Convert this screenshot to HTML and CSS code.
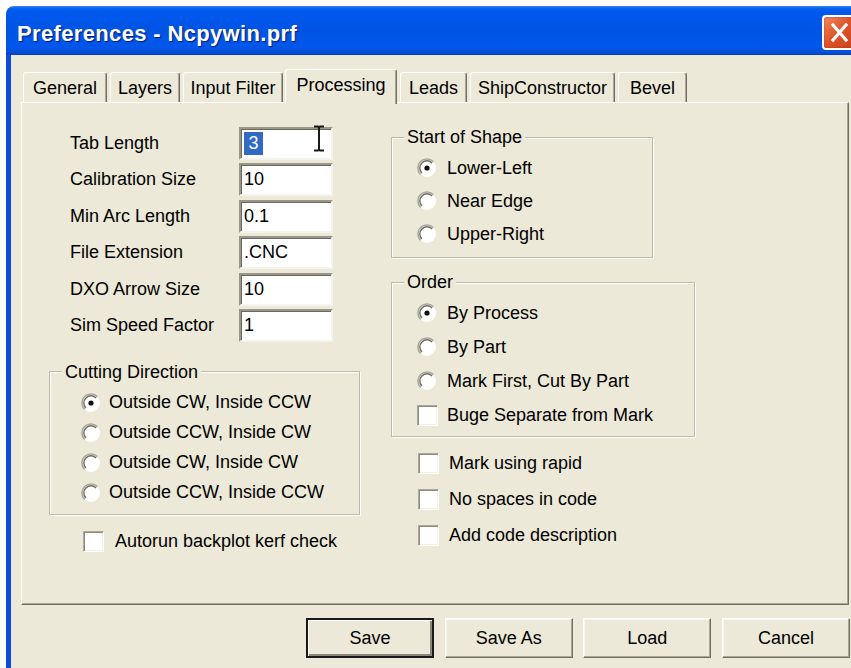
FILE: index.html
```html
<!DOCTYPE html>
<html lang="en">
<head>
<meta charset="utf-8">
<title>Preferences - Ncpywin.prf</title>
<link rel="stylesheet" href="styles.css">
</head>
<body>
<div class="window">
  <div class="titlebar">
    <span class="title">Preferences - Ncpywin.prf</span>
    <span class="close">
      <svg viewBox="0 0 31 31" width="31" height="31"><path d="M9 8 L22 23 M22 8 L9 23" stroke="#fff" stroke-width="3.2" stroke-linecap="square" fill="none"/></svg>
    </span>
  </div>
  <div class="frame">
    <div class="content">
      <div class="tabs">
        <div class="tab t-general">General</div>
        <div class="tab t-layers">Layers</div>
        <div class="tab t-input">Input Filter</div>
        <div class="tab t-processing active">Processing</div>
        <div class="tab t-leads">Leads</div>
        <div class="tab t-ship">ShipConstructor</div>
        <div class="tab t-bevel">Bevel</div>
      </div>

      <div class="panel">
        <div class="col-left">
          <div class="fields">
            <div class="field">
              <span class="label">Tab Length</span>
              <div class="input"><span class="sel">3</span>
                <svg class="ibeam" viewBox="0 0 14 27" width="14" height="27"><path d="M2 1.5 H6 L7 2.5 L8 1.5 H12 M7 2.5 V24.5 M2 25.5 H6 L7 24.5 L8 25.5 H12" stroke="#1a1a1a" stroke-width="2" fill="none"/></svg>
              </div>
            </div>
            <div class="field"><span class="label">Calibration Size</span><div class="input">10</div></div>
            <div class="field"><span class="label">Min Arc Length</span><div class="input">0.1</div></div>
            <div class="field"><span class="label">File Extension</span><div class="input">.CNC</div></div>
            <div class="field"><span class="label">DXO Arrow Size</span><div class="input">10</div></div>
            <div class="field"><span class="label">Sim Speed Factor</span><div class="input">1</div></div>
          </div>

          <fieldset class="group g-cut">
            <legend>Cutting Direction</legend>
            <div class="opts">
              <div class="opt">
                <svg class="radio" viewBox="0 0 20 20" width="20" height="20"><circle cx="10" cy="10" r="9" fill="#fff"/><path d="M3.6 16.4 A9 9 0 0 1 16.4 3.6" stroke="#aca899" stroke-width="1.6" fill="none"/><path d="M4.9 15.1 A7.2 7.2 0 0 1 15.1 4.9" stroke="#716f64" stroke-width="1.4" fill="none"/><circle cx="10" cy="10" r="2.6" fill="#111"/></svg>
                <span>Outside CW, Inside CCW</span>
              </div>
              <div class="opt">
                <svg class="radio" viewBox="0 0 20 20" width="20" height="20"><circle cx="10" cy="10" r="9" fill="#fff"/><path d="M3.6 16.4 A9 9 0 0 1 16.4 3.6" stroke="#aca899" stroke-width="1.6" fill="none"/><path d="M4.9 15.1 A7.2 7.2 0 0 1 15.1 4.9" stroke="#716f64" stroke-width="1.4" fill="none"/></svg>
                <span>Outside CCW, Inside CW</span>
              </div>
              <div class="opt">
                <svg class="radio" viewBox="0 0 20 20" width="20" height="20"><circle cx="10" cy="10" r="9" fill="#fff"/><path d="M3.6 16.4 A9 9 0 0 1 16.4 3.6" stroke="#aca899" stroke-width="1.6" fill="none"/><path d="M4.9 15.1 A7.2 7.2 0 0 1 15.1 4.9" stroke="#716f64" stroke-width="1.4" fill="none"/></svg>
                <span>Outside CW, Inside CW</span>
              </div>
              <div class="opt">
                <svg class="radio" viewBox="0 0 20 20" width="20" height="20"><circle cx="10" cy="10" r="9" fill="#fff"/><path d="M3.6 16.4 A9 9 0 0 1 16.4 3.6" stroke="#aca899" stroke-width="1.6" fill="none"/><path d="M4.9 15.1 A7.2 7.2 0 0 1 15.1 4.9" stroke="#716f64" stroke-width="1.4" fill="none"/></svg>
                <span>Outside CCW, Inside CCW</span>
              </div>
            </div>
          </fieldset>

          <div class="opt autorun"><span class="box"></span><span>Autorun backplot kerf check</span></div>
        </div>

        <div class="col-right">
          <fieldset class="group g-start">
            <legend>Start of Shape</legend>
            <div class="opts">
              <div class="opt">
                <svg class="radio" viewBox="0 0 20 20" width="20" height="20"><circle cx="10" cy="10" r="9" fill="#fff"/><path d="M3.6 16.4 A9 9 0 0 1 16.4 3.6" stroke="#aca899" stroke-width="1.6" fill="none"/><path d="M4.9 15.1 A7.2 7.2 0 0 1 15.1 4.9" stroke="#716f64" stroke-width="1.4" fill="none"/><circle cx="10" cy="10" r="2.6" fill="#111"/></svg>
                <span>Lower-Left</span>
              </div>
              <div class="opt">
                <svg class="radio" viewBox="0 0 20 20" width="20" height="20"><circle cx="10" cy="10" r="9" fill="#fff"/><path d="M3.6 16.4 A9 9 0 0 1 16.4 3.6" stroke="#aca899" stroke-width="1.6" fill="none"/><path d="M4.9 15.1 A7.2 7.2 0 0 1 15.1 4.9" stroke="#716f64" stroke-width="1.4" fill="none"/></svg>
                <span>Near Edge</span>
              </div>
              <div class="opt">
                <svg class="radio" viewBox="0 0 20 20" width="20" height="20"><circle cx="10" cy="10" r="9" fill="#fff"/><path d="M3.6 16.4 A9 9 0 0 1 16.4 3.6" stroke="#aca899" stroke-width="1.6" fill="none"/><path d="M4.9 15.1 A7.2 7.2 0 0 1 15.1 4.9" stroke="#716f64" stroke-width="1.4" fill="none"/></svg>
                <span>Upper-Right</span>
              </div>
            </div>
          </fieldset>

          <fieldset class="group g-order">
            <legend>Order</legend>
            <div class="opts">
              <div class="opt">
                <svg class="radio" viewBox="0 0 20 20" width="20" height="20"><circle cx="10" cy="10" r="9" fill="#fff"/><path d="M3.6 16.4 A9 9 0 0 1 16.4 3.6" stroke="#aca899" stroke-width="1.6" fill="none"/><path d="M4.9 15.1 A7.2 7.2 0 0 1 15.1 4.9" stroke="#716f64" stroke-width="1.4" fill="none"/><circle cx="10" cy="10" r="2.6" fill="#111"/></svg>
                <span>By Process</span>
              </div>
              <div class="opt">
                <svg class="radio" viewBox="0 0 20 20" width="20" height="20"><circle cx="10" cy="10" r="9" fill="#fff"/><path d="M3.6 16.4 A9 9 0 0 1 16.4 3.6" stroke="#aca899" stroke-width="1.6" fill="none"/><path d="M4.9 15.1 A7.2 7.2 0 0 1 15.1 4.9" stroke="#716f64" stroke-width="1.4" fill="none"/></svg>
                <span>By Part</span>
              </div>
              <div class="opt">
                <svg class="radio" viewBox="0 0 20 20" width="20" height="20"><circle cx="10" cy="10" r="9" fill="#fff"/><path d="M3.6 16.4 A9 9 0 0 1 16.4 3.6" stroke="#aca899" stroke-width="1.6" fill="none"/><path d="M4.9 15.1 A7.2 7.2 0 0 1 15.1 4.9" stroke="#716f64" stroke-width="1.4" fill="none"/></svg>
                <span>Mark First, Cut By Part</span>
              </div>
              <div class="opt"><span class="box"></span><span>Buge Separate from Mark</span></div>
            </div>
          </fieldset>

          <div class="checks">
            <div class="opt"><span class="box"></span><span>Mark using rapid</span></div>
            <div class="opt"><span class="box"></span><span>No spaces in code</span></div>
            <div class="opt"><span class="box"></span><span>Add code description</span></div>
          </div>
        </div>
      </div>

      <div class="buttons">
        <div class="btn default">Save</div>
        <div class="btn">Save As</div>
        <div class="btn">Load</div>
        <div class="btn">Cancel</div>
      </div>
    </div>
  </div>
</div>
</body>
</html>
```

FILE: styles.css
```css
html, body {
  margin: 0;
  background: #fff;
  overflow: hidden;
}

body {
  font-family: "Liberation Sans", Arial, sans-serif;
  font-size: 18px;
  color: #000;
  width: 851px;
  height: 668px;
}

.window {
  margin: 6px 0 0 6px;
  width: 860px;
}

/* Luna blue caption */
.titlebar {
  height: 49px;
  box-sizing: border-box;
  border-radius: 8px 8px 0 0;
  background: linear-gradient(180deg, #3d8ef7 0, #0b63ee 4%, #0058ee 12%, #0054e3 50%, #0057ea 84%, #0a4fd6 94%, #003fc4 100%);
  display: flex;
  align-items: flex-start;
  justify-content: space-between;
  padding: 0 9px 0 11px;
}

.title {
  font-weight: bold;
  font-size: 22px;
  line-height: 49px;
  padding-top: 3px;
  color: #fff;
  letter-spacing: 0.35px;
  text-shadow: 1px 1px 1px #0a1a78;
}

.close {
  margin-top: 9px;
  width: 31px;
  height: 31px;
  border: 2px solid #fff;
  border-radius: 4px;
  background: linear-gradient(135deg, #f08a62 0, #e0562a 45%, #c8401c 100%);
  display: flex;
  box-shadow: inset 0 0 2px #a8300c;
}

.frame {
  border-left: 5px solid #0a4ed8;
  background: #ece9d8;
  height: 613px;
}

.content {
  padding-left: 10px;
  width: 829px;
}

/* tab strip */
.tabs {
  display: flex;
  align-items: flex-end;
  gap: 3px;
  padding: 14px 0 0 2px;
}

.tab {
  box-sizing: border-box;
  height: 30px;
  padding-top: 2px;
  display: flex;
  align-items: center;
  justify-content: center;
  background: #ece9d8;
  border-top: 1px solid #fff;
  border-left: 1px solid #fff;
  border-right: 1px solid #716f64;
  box-shadow: inset -1px 0 0 #aca899;
  border-radius: 3px 3px 0 0;
  white-space: nowrap;
}

.tab.active {
  height: 35px;
  margin-bottom: -2px;
  margin-left: -1px;
  padding: 0 0 3px;
  position: relative;
  z-index: 1;
}

.t-general { width: 84px; }
.t-layers { width: 70px; }
.t-input { width: 100px; }
.t-processing { width: 112px; }
.t-leads { width: 67px; }
.t-ship { width: 145px; }
.t-bevel { width: 69px; }

/* tab page */
.panel {
  box-sizing: border-box;
  width: 828px;
  height: 503px;
  border-top: 1px solid #fff;
  border-left: 1px solid #fff;
  border-right: 1px solid #716f64;
  border-bottom: 1px solid #716f64;
  box-shadow: inset -1px -1px 0 #aca899;
  display: flex;
  padding: 24px 0 0 26px;
}

.col-left {
  width: 312px;
  display: flex;
  flex-direction: column;
}

.col-right {
  width: 304px;
  margin-left: 31px;
  display: flex;
  flex-direction: column;
}

.fields {
  display: flex;
  flex-direction: column;
  gap: 3.4px;
}

.field {
  display: flex;
  align-items: center;
  height: 33px;
  padding-left: 22px;
}

.label {
  width: 169px;
}

.input {
  position: relative;
  box-sizing: border-box;
  width: 94px;
  height: 33px;
  background: #fff;
  border-style: solid;
  border-width: 2px;
  border-color: #9a978a #f4f3ee #f4f3ee #9a978a;
  box-shadow: inset 1px 1px 0 #6a685e;
  padding-left: 3px;
  display: flex;
  align-items: center;
}

.sel {
  background: #316ac5;
  color: #fff;
  padding: 0 4.5px;
  line-height: 23px;
}

.ibeam {
  position: absolute;
  left: 71px;
  top: -4px;
}

/* etched group boxes */
.group {
  margin: 0;
  min-width: 0;
  padding: 0;
  border: 1px solid #bcb9a8;
  box-shadow: 1px 1px 0 #fff, inset 1px 1px 0 #fff;
}

.group legend {
  line-height: 20px;
  padding: 0 3px;
  margin-left: 12px;
  background: #ece9d8;
}

.opts {
  display: flex;
  flex-direction: column;
}

.opt {
  display: flex;
  align-items: center;
  white-space: nowrap;
}

.radio {
  flex: none;
}

.box {
  flex: none;
  box-sizing: border-box;
  width: 21px;
  height: 21px;
  background: #fff;
  border-style: solid;
  border-width: 1px;
  border-color: #aca899 #fff #fff #aca899;
  box-shadow: inset 1px 1px 0 #8e8c80, inset -1px -1px 0 #f1efe2;
}

.g-cut {
  margin: 20px 0 0 1px;
  width: 311px;
  box-sizing: border-box;
}

.g-cut .opts {
  padding: 6px 0 6px 31px;
}

.g-cut .opt {
  height: 30px;
  gap: 8px;
}

.autorun {
  margin: 16px 0 0 35px;
  height: 21px;
  gap: 11px;
}

.g-start {
  width: 262px;
  box-sizing: border-box;
}

.g-start .opts {
  padding: 4.5px 0 6.5px 25px;
}

.g-start .opt {
  height: 33px;
  gap: 10px;
}

.g-order {
  margin-top: 14px;
  width: 304px;
  box-sizing: border-box;
}

.g-order .opts {
  padding: 4px 0 4px 25px;
}

.g-order .opt {
  height: 34px;
  gap: 10px;
}

.g-order .box {
  margin-right: -1px;
}

.checks {
  margin: 8px 0 0 27px;
  display: flex;
  flex-direction: column;
}

.checks .opt {
  height: 36px;
  gap: 10px;
}

/* command buttons */
.buttons {
  display: flex;
  justify-content: flex-end;
  gap: 10.67px;
  margin-top: 13px;
}

.btn {
  box-sizing: border-box;
  width: 128px;
  height: 40px;
  display: flex;
  align-items: center;
  justify-content: center;
  background: #ece9d8;
  border-style: solid;
  border-width: 1px;
  border-color: #fff #716f64 #716f64 #fff;
  box-shadow: inset -1px -1px 0 #aca899, inset 1px 1px 0 #f6f5ef;
}

.btn.default {
  border: 2px solid #1a1a1a;
  box-shadow: inset 1px 1px 0 #fff, inset -2px -2px 0 #8a887c;
}
```
